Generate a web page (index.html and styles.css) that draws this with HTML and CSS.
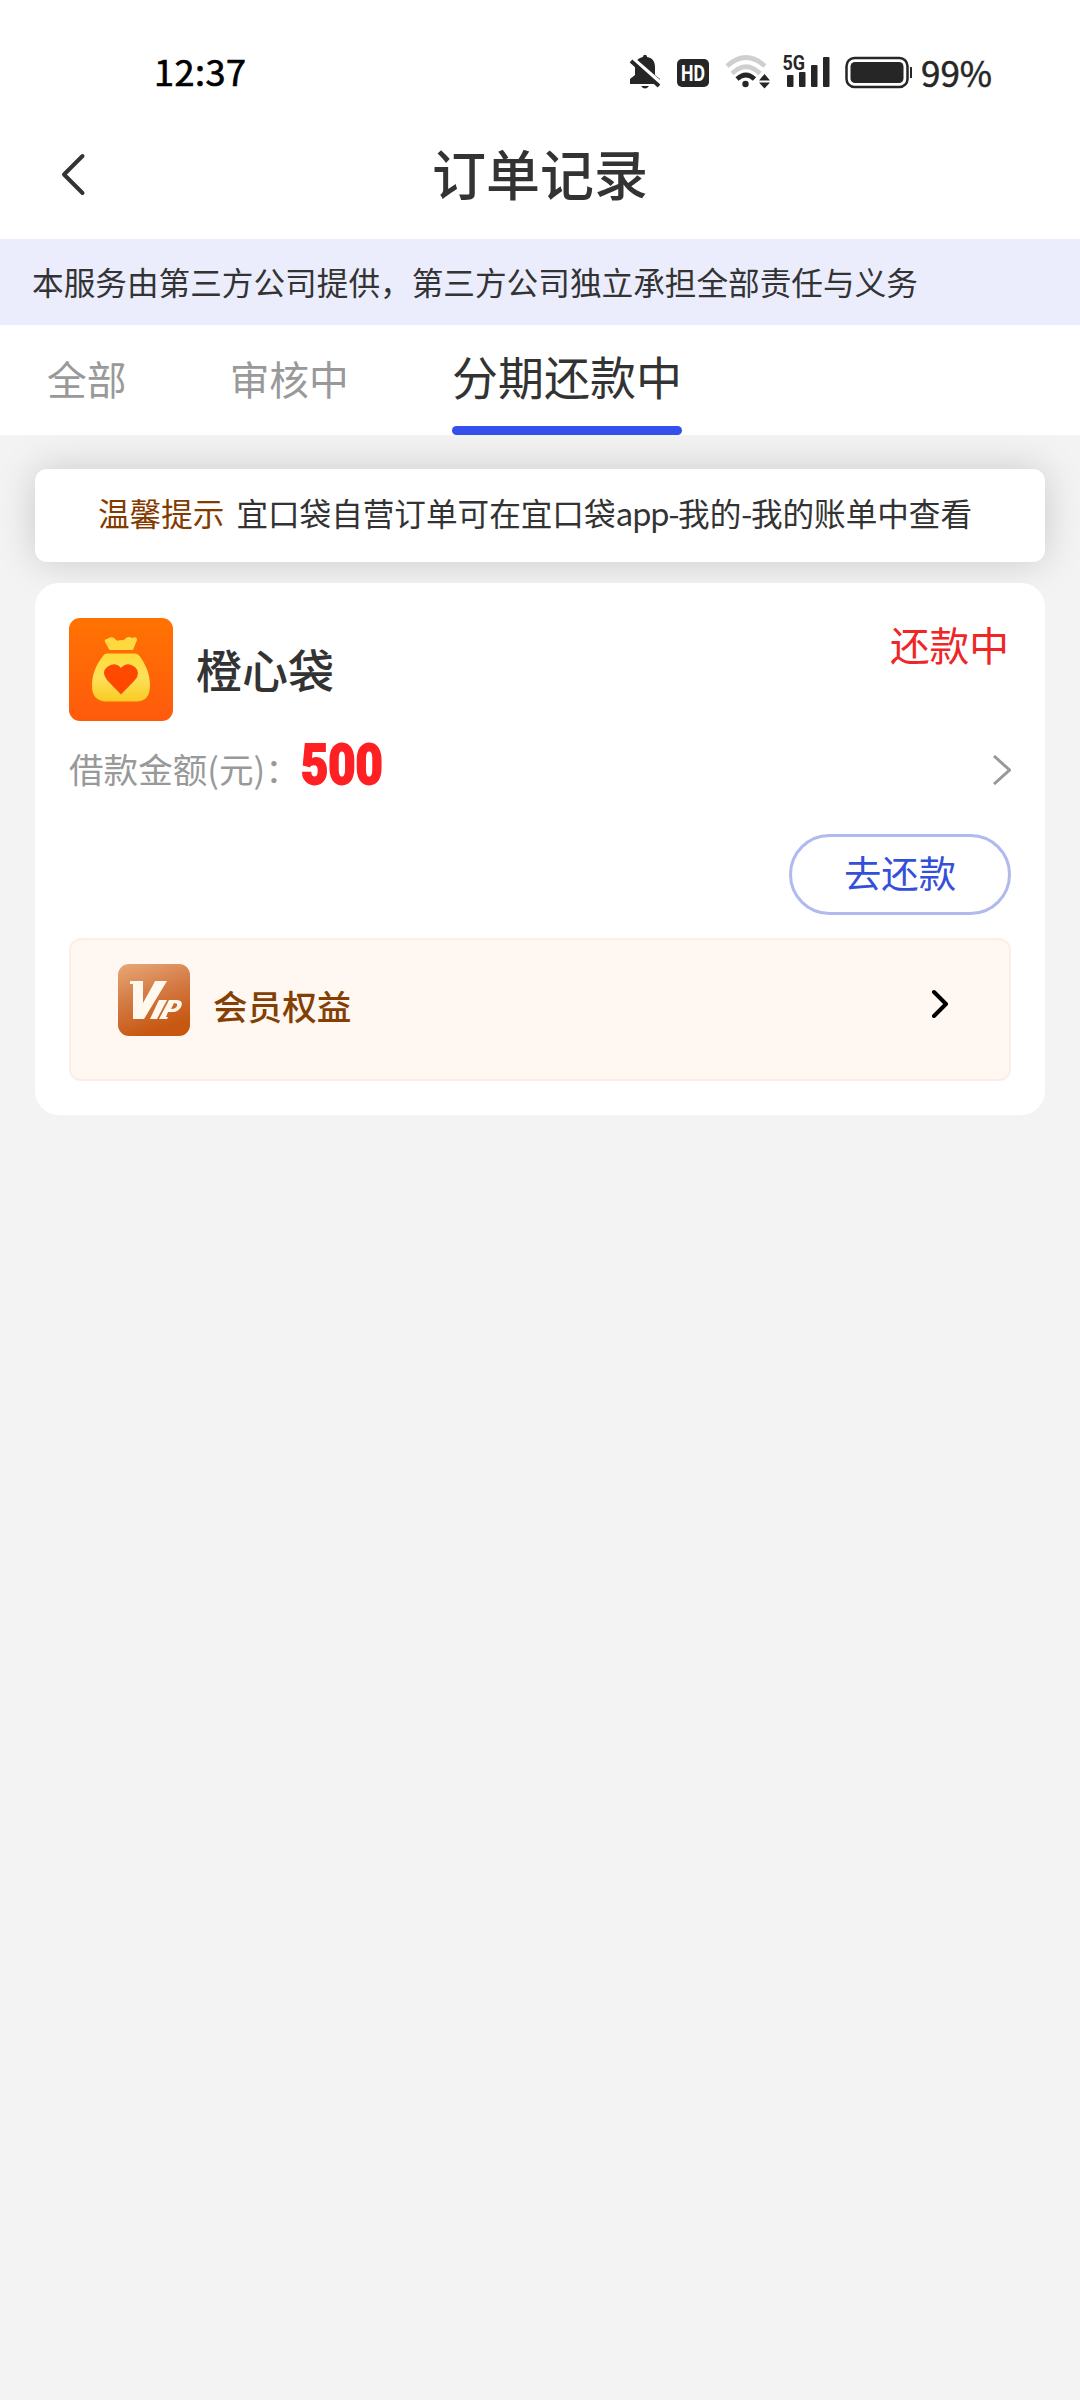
FILE: index.html
```html
<!DOCTYPE html>
<html lang="zh-CN">
<head>
<meta charset="utf-8">
<title>订单记录</title>
<link rel="stylesheet" href="styles.css">
</head>
<body>
<div class="status">
  <span class="time">12:37</span>
  <svg class="status-icons" width="292" height="46" viewBox="620 50 292 46">
    <g fill="#262626">
      <path d="M630 84v-5l5-4V67c0-6 3-9 8-10 0-3 4-3 4 0 6 1 8 5 8 10v8l5 4v5zM641 86h8q-4 5-8 0z"/>
      <path d="M632 58l31 27" stroke="#fff" stroke-width="4"/>
      <path d="M631 61l28 25" stroke="#262626" stroke-width="3.800"/>
      <rect x="677" y="59" width="32" height="28" rx="5"/>
    </g>
    <text class="hd" x="693" y="80.500" text-anchor="middle" textLength="24" lengthAdjust="spacingAndGlyphs">HD</text>
    <g fill="none" stroke-width="4.600">
      <path d="M727 66Q746 49 765 66M732 73.500Q746 60 760 73.500" stroke="#cfcfcf"/>
      <path d="M737 79Q746 71 754.500 79" stroke="#262626"/>
    </g>
    <g fill="#262626">
      <circle cx="745.500" cy="84" r="3.200"/>
      <path d="M759 80.500l5.500-6.500 5.500 6.500zM759 82.500l5.500 6 5.500-6z"/>
      <rect x="787" y="75" width="6.500" height="12" rx="1"/>
      <rect x="799" y="72" width="6.500" height="15" rx="1"/>
      <rect x="811" y="65" width="6.500" height="22" rx="1"/>
      <rect x="823" y="57" width="6.500" height="30" rx="1"/>
      <rect x="850.500" y="62" width="53" height="21" rx="4.500"/>
      <path d="M910 67h1q2 0 2 2v7q0 2-2 2h-1z"/>
    </g>
    <text class="net" x="782.500" y="70" textLength="22.500" lengthAdjust="spacingAndGlyphs">5G</text>
    <rect x="846.500" y="58" width="61" height="29" rx="8" fill="none" stroke="#262626" stroke-width="2.500"/>
  </svg>
  <span class="battery">99%</span>
</div>
<header class="header">
  <svg class="back" width="26" height="46" viewBox="0 0 26 46"><path d="M22.500 4L4 22.500 22.500 41" fill="none" stroke="#333" stroke-width="4" stroke-linecap="round" stroke-linejoin="round"/></svg>
  <h1 class="title">订单记录</h1>
</header>
<div class="notice">本服务由第三方公司提供，第三方公司独立承担全部责任与义务</div>
<nav class="tabs">
  <span class="tab">全部</span>
  <span class="tab">审核中</span>
  <span class="tab active">分期还款中</span>
</nav>
<main class="content">
  <div class="tip"><span class="tip-label">温馨提示</span><span class="tip-text">宜口袋自营订单可在宜口袋<span class="latin">app-</span>我的<span class="latin">-</span>我的账单中查看</span></div>
  <section class="card">
    <div class="card-head">
      <svg class="logo" width="104" height="103" viewBox="0 0 104 103">
        <defs>
          <linearGradient id="bg" x2="0" y2="1"><stop stop-color="#ff7302"/><stop offset="1" stop-color="#ff5a0c"/></linearGradient>
          <linearGradient id="bag" x2="0" y2="1"><stop stop-color="#ffdc38"/><stop offset=".5" stop-color="#fde05a"/><stop offset="1" stop-color="#f8cb22"/></linearGradient>
        </defs>
        <rect width="104" height="103" rx="11" fill="url(#bg)"/>
        <path d="M40.500 32L36 24q-1-3 2-3 4-3 7-1 3 4 6 2 4 1 6-2 3-2 6 0 5-2 5 2l-4 10z" fill="#ffd940"/>
        <path d="M38 35.500h28q3 0 5 3c6 9 10 17 10 29q0 16-14 16H37Q23 83 23 68c0-12 4-21 11-30q1-2.500 4-2.500z" fill="url(#bag)"/>
        <path d="M52 76.500L38 62q-6-8 0-13 8-6 14 1 6-7 14-1 6 6 0 13z" fill="#ff4800"/>
      </svg>
      <h2 class="name">橙心袋</h2>
      <span class="state">还款中</span>
    </div>
    <div class="amount">
      <span class="amount-label">借款金额(元)：</span>
      <strong class="amount-value">500</strong>
      <svg class="chevron" width="18" height="30" viewBox="0 0 18 30"><path d="M1 1l15.500 14L1 29" fill="none" stroke="#999" stroke-width="3"/></svg>
    </div>
    <div class="actions"><button class="repay">去还款</button></div>
    <div class="vip">
      <svg class="vip-icon" width="72" height="72" viewBox="0 0 72 72">
        <defs><linearGradient id="vip" x2=".35" y2="1"><stop stop-color="#e8a878"/><stop offset=".5" stop-color="#d47b45"/><stop offset="1" stop-color="#c75711"/></linearGradient></defs>
        <rect width="72" height="72" rx="11" fill="url(#vip)"/>
        <g fill="#fff8ef">
          <path d="M12 17h13v22l10-18 2-4h12L26 55H15V20h-3z"/>
          <path d="M41 36h8L39 55h-7l7-15z"/>
          <path fill-rule="evenodd" d="M51 36h8q7 1 4 7-3 5-8 5h-5l-2 5h2l-1 2h-8l8-15zM56 39l-3 6q5 0 6-3 1-3-3-3z"/>
        </g>
      </svg>
      <span class="vip-text">会员权益</span>
      <svg class="vip-arrow" width="18" height="30" viewBox="0 0 18 30"><path d="M3 3l12 12L3 27" fill="none" stroke="#000" stroke-width="4" stroke-linecap="round" stroke-linejoin="round"/></svg>
    </div>
  </section>
</main>
</body>
</html>
```
FILE: styles.css
```css
* { box-sizing: border-box; }
body {
  margin: 0;
  min-height: 2400px;
  background: #f3f3f3;
  color: #333;
  font-family: "Noto Sans CJK SC", sans-serif;
}
h1, h2 { margin: 0; font-weight: 500; }
.status {
  display: flex;
  align-items: center;
  height: 110px;
  padding: 36px 87px 0 154px;
  background: #fff;
}
.time {
  padding-bottom: 5px;
  color: #000;
  font-size: 36px;
  letter-spacing: .5px;
  line-height: 69px;
  -webkit-text-stroke: .7px #000;
}
.status-icons { margin-left: auto; }
.hd { font: bold 22px Roboto, sans-serif; fill: #fff; }
.net { font: bold 21px Roboto, sans-serif; fill: #262626; }
.battery {
  width: 72px;
  margin-left: 9px;
  padding-bottom: 2px;
  color: #262626;
  font-size: 35px;
  line-height: 72px;
  white-space: nowrap;
  -webkit-text-stroke: .5px #262626;
}
.header {
  display: flex;
  align-items: center;
  height: 129px;
  padding: 0 60px;
  background: #fff;
}
.title { flex: 1; margin-right: 26px; padding-bottom: 4px; font-size: 54px; line-height: 125px; text-align: center; }
.notice {
  height: 86px;
  padding-left: 32px;
  background: #ebedfd;
  font-size: 31.65px;
  line-height: 85px;
}
.tabs {
  display: flex;
  gap: 103.300px;
  height: 110px;
  padding-left: 47px;
  background: #fff;
}
.tab { color: #999; font-size: 39.7px; line-height: 106px; }
.tab.active {
  position: relative;
  color: #333;
  font-size: 46px;
  line-height: 101px;
}
.tab.active::after {
  content: "";
  position: absolute;
  right: 0;
  bottom: 0;
  left: 0;
  height: 9px;
  border-radius: 5px;
  background: #3550ea;
}
.content { padding: 34px 35px; }
.tip {
  display: flex;
  height: 93px;
  padding-left: 63px;
  border-radius: 12px;
  background: #fff;
  box-shadow: 0 0 38px rgba(0, 0, 0, .17);
  font-size: 31.6px;
  line-height: 87px;
}
.tip-label { margin-right: 12px; color: #833b00; }
.tip-text { white-space: nowrap; }
.latin { letter-spacing: -1.4px; }
.card {
  position: relative;
  height: 532px;
  margin-top: 21px;
  padding: 35px 34px 34px;
  border-radius: 24px;
  background: #fff;
}
.card-head { display: flex; height: 103px; }
.logo { flex: none; }
.name { margin-left: 23px; font-size: 46px; line-height: 101px; }
.state { margin: 0 2px 0 auto; font-size: 39.7px; line-height: 51px; color: #f02526; }
.amount { display: flex; align-items: center; height: 98px; }
.amount-label { width: 232px; padding-bottom: 4px; font-size: 34.6px; color: #999; white-space: nowrap; }
.amount-value {
  margin-top: -10px;
  color: #ff2024;
  font: 900 56px/80px Roboto, sans-serif;
  transform: scaleX(.84);
  transform-origin: left;
  -webkit-text-stroke: 1.8px #ff2024;
}
.chevron { margin-left: auto; }
.actions { display: flex; justify-content: flex-end; margin-top: 15px; }
.repay {
  width: 222px;
  height: 81px;
  padding: 0 0 6px;
  border: 3px solid #b0baee;
  border-radius: 41px;
  background: #fff;
  color: #3550d8;
  font: 37.4px/68px "Noto Sans CJK SC", sans-serif;
}
.vip {
  display: flex;
  height: 143px;
  margin-top: 23px;
  padding: 24px 60px 0 47px;
  border: 2px solid #fbeee6;
  border-radius: 12px;
  background: #fff7f1;
}
.vip-text { margin-left: 23px; font-size: 34.6px; font-weight: 500; line-height: 83px; color: #833f04; }
.vip-arrow { margin: 25px 0 0 auto; }
```
